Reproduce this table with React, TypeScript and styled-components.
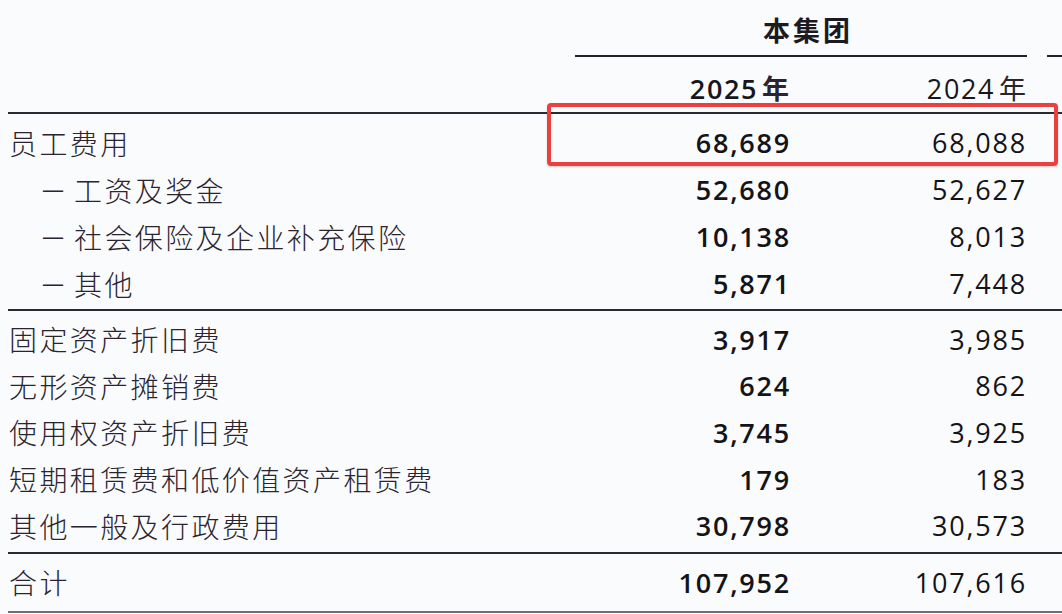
import React from "react";
import styled, { createGlobalStyle } from "styled-components";

const COLS = "567px 225px 237px 237px";
const CJK = `"Noto Sans CJK SC", "Noto Sans", sans-serif`;
const NUM = `"Open Sans", "Noto Sans", "Noto Sans CJK SC", sans-serif`;

const GlobalStyle = createGlobalStyle`
  html, body {
    margin: 0;
    padding: 0;
    background: #fafbfd;
    overflow: hidden;
  }
  * { box-sizing: border-box; }
`;

const Page = styled.div`
  width: 1062px;
  height: 614px;
  overflow: hidden;
  padding-left: 8px;
  background: #fafbfd;
`;

const Table = styled.div`
  width: 1266px;
  display: flex;
  flex-direction: column;
`;

const GridRow = styled.div<{ $h: number }>`
  display: grid;
  grid-template-columns: ${COLS};
  height: ${(p) => p.$h}px;
  align-items: center;
  position: relative;
`;

const HeaderTop = styled(GridRow)`
  align-items: stretch;
`;

const GroupTitle = styled.div`
  grid-column: span 2;
  margin-right: 10px;
  border-bottom: 2px solid #25222b;
  display: flex;
  align-items: center;
  justify-content: center;
  padding-left: 14px;
  padding-top: 3px;
  font-family: ${CJK};
  font-size: 27px;
  font-weight: 600;
  letter-spacing: 3px;
  color: #1c1a20;
`;

const NextGroup = styled.div`
  margin-left: 10px;
  border-bottom: 2px solid #25222b;
`;

const HeaderYears = styled(GridRow)`
  border-bottom: 2px solid #2a2830;
  padding-top: 5px;
`;

const Blank = styled.div``;

const YearCell = styled.div<{ $bold?: boolean }>`
  text-align: right;
  padding-right: 11px;
  font-family: ${NUM};
  font-size: 27px;
  font-weight: ${(p) => (p.$bold ? 600 : 400)};
  letter-spacing: 1.6px;
  color: #17161a;
  white-space: nowrap;
`;

const YearChar = styled.span<{ $bold?: boolean }>`
  font-family: ${CJK};
  font-size: 27px;
  font-weight: ${(p) => (p.$bold ? 600 : 400)};
  margin-left: 4px;
  letter-spacing: 0;
  color: #2a2430;
`;

const Section = styled.div<{ $pt: number; $pb: number; $line: string }>`
  padding-top: ${(p) => p.$pt}px;
  padding-bottom: ${(p) => p.$pb}px;
  border-bottom: 2px solid ${(p) => p.$line};
  display: flex;
  flex-direction: column;
`;

const Label = styled.div<{ $indent?: boolean }>`
  padding-left: ${(p) => (p.$indent ? 34 : 1)}px;
  font-family: ${CJK};
  font-size: 28px;
  font-weight: 300;
  letter-spacing: 2.4px;
  color: #2a2430;
  white-space: nowrap;
  display: flex;
  align-items: center;
`;

const Dash = styled.span`
  display: inline-block;
  width: 32px;
  font-family: ${NUM};
  font-size: 22px;
  font-weight: 400;
  letter-spacing: 0;
  line-height: 1;
  position: relative;
  top: -2px;
`;

const Num = styled.div<{ $bold?: boolean }>`
  text-align: right;
  padding-right: 9px;
  font-family: ${NUM};
  font-size: 27px;
  font-weight: ${(p) => (p.$bold ? 600 : 400)};
  letter-spacing: 1.8px;
  color: #141317;
  white-space: nowrap;
`;

const NumWide = styled(Num)`
  padding-right: 10px;
`;

const Highlight = styled.div`
  position: absolute;
  left: 539px;
  top: -16px;
  width: 511px;
  height: 63px;
  border: 4px solid #ec3f3f;
  border-radius: 4px;
  box-shadow: 0 1px 2px rgba(180, 40, 40, 0.25);
  pointer-events: none;
  z-index: 2;
`;

type Item = { label: string; indent?: boolean; a: string; b: string; mark?: boolean };

const group1: Item[] = [
  { label: "员工费用", a: "68,689", b: "68,088", mark: true },
  { label: "工资及奖金", indent: true, a: "52,680", b: "52,627" },
  { label: "社会保险及企业补充保险", indent: true, a: "10,138", b: "8,013" },
  { label: "其他", indent: true, a: "5,871", b: "7,448" },
];

const group2: Item[] = [
  { label: "固定资产折旧费", a: "3,917", b: "3,985" },
  { label: "无形资产摊销费", a: "624", b: "862" },
  { label: "使用权资产折旧费", a: "3,745", b: "3,925" },
  { label: "短期租赁费和低价值资产租赁费", a: "179", b: "183" },
  { label: "其他一般及行政费用", a: "30,798", b: "30,573" },
];

const BodyRow: React.FC<{ item: Item; h: number }> = ({ item, h }) => (
  <GridRow $h={h}>
    <Label $indent={item.indent}>
      {item.indent && <Dash>—</Dash>}
      {item.label}
    </Label>
    <Num $bold>{item.a}</Num>
    <NumWide>{item.b}</NumWide>
    <Blank />
    {item.mark && <Highlight />}
  </GridRow>
);

export default function App() {
  return (
    <>
      <GlobalStyle />
      <Page>
        <Table>
          <HeaderTop $h={57}>
            <Blank />
            <GroupTitle>本集团</GroupTitle>
            <NextGroup />
          </HeaderTop>
          <HeaderYears $h={57}>
            <Blank />
            <YearCell $bold>
              2025<YearChar $bold>年</YearChar>
            </YearCell>
            <YearCell>
              2024<YearChar>年</YearChar>
            </YearCell>
            <Blank />
          </HeaderYears>
          <Section $pt={5} $pb={2} $line="#2a2830">
            {group1.map((it) => (
              <BodyRow key={it.label} item={it} h={47} />
            ))}
          </Section>
          <Section $pt={5} $pb={3} $line="#2a2830">
            {group2.map((it) => (
              <BodyRow key={it.label} item={it} h={46.6} />
            ))}
          </Section>
          <Section $pt={0} $pb={0} $line="#6e6d75">
            <BodyRow item={{ label: "合计", a: "107,952", b: "107,616" }} h={57} />
          </Section>
        </Table>
      </Page>
    </>
  );
}
